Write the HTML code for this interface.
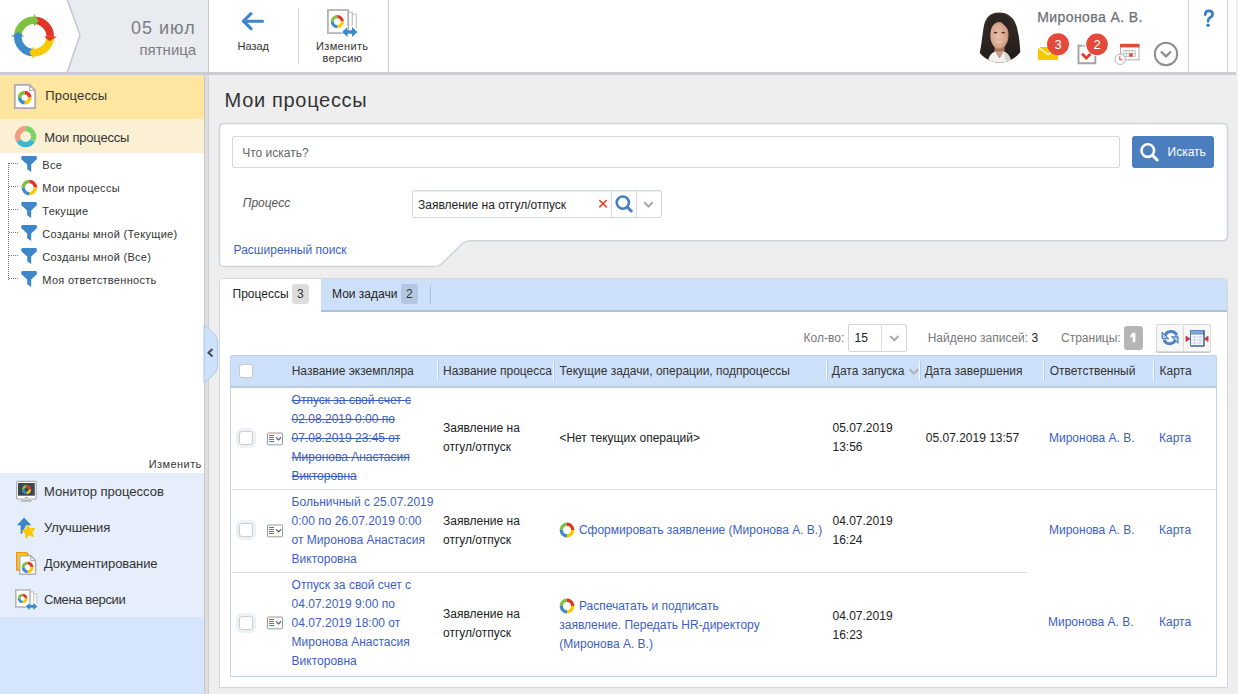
<!DOCTYPE html>
<html><head><meta charset="utf-8">
<style>
*{box-sizing:border-box;margin:0;padding:0}
html,body{width:1238px;height:694px;overflow:hidden;background:#eeeeee;font-family:"Liberation Sans",sans-serif;color:#333;position:relative}
.a{position:absolute}
.t{position:absolute;white-space:nowrap;line-height:1}
.sb{font-size:13px;color:#333}
.tr{font-size:11px;color:#333;letter-spacing:0.3px}
.c12{font-size:12px}
.ml{position:absolute;font-size:12px;line-height:19px;white-space:nowrap;margin-top:1px}
.lnk{color:#3d5fc4}
.cb{position:absolute;width:20px;height:20px;border-radius:6px;background:#ecf1f8}
.cb i{position:absolute;left:3px;top:3px;width:14px;height:14px;border:1px solid #cdcdcd;border-radius:3px;background:#fff}
</style></head><body>
<!-- ============ HEADER ============ -->
<div class="a" style="left:0;top:0;width:1236px;height:72px;background:#fff"></div>
<div class="a" style="left:1236px;top:0;width:2px;height:694px;background:#f0f0f0"></div>
<div class="a" style="left:0;top:72px;width:1236px;height:3px;background:#c9cdd2"></div>
<svg class="a" style="left:0;top:0" width="209" height="72">
<polygon points="67,0 208,0 208,72 67,72 80,35" fill="#e8ebf0"/>
<polyline points="67,-1 80,35 67,73" fill="none" stroke="#c6cad0" stroke-width="1.6"/>
<rect x="208" y="0" width="1" height="72" fill="#c9cdd2"/>
<path d="M17.80,36.50 A16.2,16.2 0 0 1 34.85,20.32" stroke="#7cc23c" stroke-width="7.6" fill="none"/>
<path d="M34.00,20.30 A16.2,16.2 0 0 1 50.18,37.35" stroke="#e2342b" stroke-width="7.6" fill="none"/>
<path d="M50.20,36.50 A16.2,16.2 0 0 1 33.15,52.68" stroke="#fbc900" stroke-width="7.6" fill="none"/>
<path d="M34.00,52.70 A16.2,16.2 0 0 1 17.82,35.65" stroke="#3e8acb" stroke-width="7.6" fill="none"/>
<polygon points="34.00,26.50 34.00,13.50 38.74,21.01" fill="#7cc23c"/>
<polygon points="44.00,36.50 57.00,36.50 49.49,41.24" fill="#e2342b"/>
<polygon points="34.00,46.50 34.00,59.50 29.26,51.99" fill="#fbc900"/>
<polygon points="24.00,36.50 11.00,36.50 18.51,31.76" fill="#3e8acb"/>
</svg>
<div class="t" style="left:131px;top:19px;font-size:18px;letter-spacing:1px;color:#7b7d82">05 июл</div>
<div class="t" style="left:139.5px;top:42px;font-size:15px;color:#7b7d82">пятница</div>
<!-- toolbar -->
<svg class="a" style="left:209px;top:0" width="180" height="72">
<path d="M41,8 V0" stroke="none"/>
<path d="M34.4,21.2 H53.5 M42,13.7 L34.4,21.2 L42,28.7" stroke="#3f86c8" stroke-width="3.1" fill="none" stroke-linecap="round" stroke-linejoin="round"/>
<rect x="89" y="8" width="1" height="56" fill="#d9dde2"/>
<rect x="179" y="0" width="2" height="72" fill="#c9cdd2"/>
</svg>
<div class="t" style="left:237.5px;top:40.7px;font-size:11px;color:#333">Назад</div>
<svg class="a" style="left:320px;top:5px" width="45" height="36">
<path d="M28.7,7.3 H32.3 V20.8" stroke="#c4c4c4" stroke-width="1.3" fill="none"/>
<path d="M32.3,9.4 H36.4 V23" stroke="#cacaca" stroke-width="1.3" fill="none"/>
<rect x="7.9" y="5" width="20.3" height="23.1" fill="#fff" stroke="#b0b0b0" stroke-width="1.7"/>
<path d="M12.3,16.6 A5,5 0 0 1 17.3,11.6" stroke="#7cc23c" stroke-width="3.1" fill="none"/>
<path d="M17.3,11.6 A5,5 0 0 1 22.3,16.6" stroke="#e2342b" stroke-width="3.1" fill="none"/>
<path d="M22.3,16.6 A5,5 0 0 1 17.3,21.6" stroke="#fbc900" stroke-width="3.1" fill="none"/>
<path d="M17.3,21.6 A5,5 0 0 1 12.3,16.6" stroke="#3e8acb" stroke-width="3.1" fill="none"/>
<path d="M22,27 L27.5,22 V25.3 H32 V22 L37.4,27 L32,32 V28.7 H27.5 V32 Z" fill="#3d87cc" stroke="#fff" stroke-width="1.2" paint-order="stroke"/>
</svg>
<div class="t" style="left:316px;top:40.7px;font-size:11px;letter-spacing:0.35px;color:#333">Изменить</div>
<div class="t" style="left:322.5px;top:52.5px;font-size:11px;letter-spacing:0.35px;color:#333">версию</div>
<!-- user area -->
<svg class="a" style="left:972px;top:8px" width="56" height="60">
<defs><clipPath id="av"><circle cx="27.7" cy="29.5" r="25.2"/></clipPath>
<radialGradient id="skin" cx="0.45" cy="0.5" r="0.6"><stop offset="0" stop-color="#e8c0a8"/><stop offset="0.7" stop-color="#d7a58c"/><stop offset="1" stop-color="#b98068"/></radialGradient>
<linearGradient id="hair" x1="0" y1="0" x2="0" y2="1"><stop offset="0" stop-color="#3a302b"/><stop offset="1" stop-color="#1f1a18"/></linearGradient></defs>
<g clip-path="url(#av)">
<path d="M26,4.3 C18,4.5 13,10 11.5,20 C10,30 9,42 6.5,49 C10,53 15,56 19,56 L37,56 C42,56 46,52 48.5,47 C48,38 47.5,30 45.5,22 C43.5,10 36,4.2 26,4.3 Z" fill="url(#hair)"/>
<path d="M22.5,37 L22.5,45 L32.5,45 L32.5,37 Z" fill="#a87560"/>
<path d="M18.3,27 C18.3,19 22,14 27.5,14 C33,14 36.5,19 36.5,27 C36.5,35.5 32.5,40.8 27.3,40.8 C22,40.8 18.3,35.5 18.3,27 Z" fill="url(#skin)"/>
<path d="M17.5,31 C17,21 21,15 27,12.5 C29.5,15 33.5,17 37,23 L38.5,14 C36,8 31,6 27,6 C22,6 17,9 15.5,15 Z" fill="#2b2421"/>
<path d="M21.8,25 Q23.5,24 25.2,25 M29.5,25 Q31.2,24 32.9,25" stroke="#4e3429" stroke-width="1.3" fill="none"/>
<path d="M24.3,33.3 Q27.3,35.2 30.3,33.3" stroke="#e9cbbd" stroke-width="1.4" fill="none"/>
<path d="M15,58 C16,48 20,44 23.5,43.5 L27.5,50 L31.5,43.5 C35,44 39,48 40,58 Z" fill="#f3f1ef"/>
<path d="M23.5,43.5 L27.5,50 L31.5,43.5 Z" fill="#cf9e88"/>
<path d="M31.5,43.5 C34.5,44.5 37,47 38.5,51 L40,58 L35.5,58 Z" fill="#d6d3d1"/>
</g>
</svg>
<div class="t" style="left:1037.3px;top:10.3px;font-size:14px;letter-spacing:0.4px;color:#6c7078;-webkit-text-stroke:0.25px #6c7078">Миронова А. В.</div>
<svg class="a" style="left:1030px;top:30px" width="150" height="40">
<!-- envelope -->
<rect x="8" y="17" width="20" height="13" fill="#f9c800"/>
<path d="M8,17 L18,24.5 L28,17" stroke="#fff" stroke-width="1.2" fill="none"/>
<circle cx="28" cy="14.3" r="11" fill="#e5493a"/>
<!-- tasks -->
<path d="M52.4,15.8 H48.5 V33.3 H65.3 V26" stroke="#a3a3a3" stroke-width="1.9" fill="none"/>
<rect x="53.2" y="14.9" width="1.6" height="2" fill="#b0b0b0"/>
<path d="M52,23.8 L56.3,28 L60.5,24" stroke="#e33b2e" stroke-width="2.8" fill="none"/>
<circle cx="67" cy="14.3" r="10.8" fill="#e5493a"/>
<!-- calendar -->
<rect x="90.5" y="14.5" width="18.5" height="15.3" fill="#fff" stroke="#b0b0b0" stroke-width="1"/>
<rect x="90" y="13.8" width="19.5" height="3.6" fill="#e5493a"/>
<path d="M93.3,20.6 H105.3 M93.3,23.6 H105.3 M93.3,26.6 H105.3 M93.3,20.6 V26.6 M96.3,20.6 V26.6 M99.3,20.6 V26.6 M102.3,20.6 V26.6 M105.3,20.6 V26.6" stroke="#bdbdbd" stroke-width="0.9"/>
<rect x="99.3" y="23.4" width="3.3" height="3.3" fill="#e5493a"/>
<circle cx="90.2" cy="29.3" r="5.2" fill="#fff" stroke="#a9a9a9" stroke-width="0.9"/>
<path d="M89.8,26.3 V29.8 H92.6" stroke="#e5493a" stroke-width="1.1" fill="none"/>
<!-- chevron circle -->
<circle cx="136" cy="24" r="11.2" fill="none" stroke="#8e8e8e" stroke-width="2"/>
<path d="M131,21.5 L136,26.3 L141,21.5" stroke="#8e8e8e" stroke-width="2.4" fill="none"/>
</svg>
<div class="t" style="left:1054.5px;top:37.6px;font-size:13px;color:#fff">3</div>
<div class="t" style="left:1093.5px;top:37.6px;font-size:13px;color:#fff">2</div>
<div class="a" style="left:1188px;top:0;width:1px;height:72px;background:#cdd1d6"></div>
<div class="a" style="left:1227px;top:0;width:1px;height:72px;background:#cdd1d6"></div>
<svg class="a" style="left:1195px;top:5px" width="25" height="28" viewBox="1195 5 25 28">
<path d="M1205.2,14.6 C1205.3,11.9 1206.9,10.9 1208.9,10.9 C1211.2,10.9 1212.6,12.4 1212.6,14.4 C1212.6,17.2 1208.4,17.6 1208.1,20.4 V21.2" stroke="#3d7cc9" stroke-width="2.7" fill="none" stroke-linecap="round"/>
<circle cx="1208.1" cy="25.3" r="1.8" fill="#3d7cc9"/>
</svg>

<!-- ============ SIDEBAR ============ -->
<div class="a" style="left:0;top:75px;width:204px;height:619px;background:#fff"></div>
<div class="a" style="left:0;top:75px;width:204px;height:44px;background:#fee6a0"></div>
<div class="a" style="left:0;top:119px;width:204px;height:34px;background:#fcf0d4"></div>
<div class="a" style="left:0;top:473px;width:204px;height:144px;background:#e5eefa"></div>
<div class="a" style="left:0;top:617px;width:204px;height:77px;background:#d5e5fb"></div>
<div class="a" style="left:204px;top:75px;width:1px;height:619px;background:#c8c8c8"></div>
<div class="a" style="left:205px;top:75px;width:3px;height:619px;background:#dedede"></div>
<div class="a" style="left:208px;top:75px;width:1px;height:619px;background:#d2d2d2"></div>
<svg class="a" style="left:0;top:0" width="204" height="694">
<path d="M14.8,84.8 H29.5 L35.2,90.5 V108.2 H14.8 Z" fill="#fff" stroke="#acacac" stroke-width="1.8"/>
<path d="M29.5,84.8 V90.5 H35.2" fill="none" stroke="#b3b3b3" stroke-width="1.2"/>
<path d="M19.65,97.60 A5.05,5.05 0 0 1 24.70,92.55" stroke="#7cc23c" stroke-width="3.7" fill="none"/>
<path d="M24.70,92.55 A5.05,5.05 0 0 1 29.75,97.60" stroke="#e2342b" stroke-width="3.7" fill="none"/>
<path d="M29.75,97.60 A5.05,5.05 0 0 1 24.70,102.65" stroke="#fbc900" stroke-width="3.7" fill="none"/>
<path d="M24.70,102.65 A5.05,5.05 0 0 1 19.65,97.60" stroke="#3e8acb" stroke-width="3.7" fill="none"/>
<path d="M18.67,140.60 A8,8 0 0 1 25.60,128.60" stroke="#f49a80" stroke-width="5.2" fill="none"/>
<path d="M25.60,128.60 A8,8 0 0 1 32.53,140.60" stroke="#7ed36c" stroke-width="5.2" fill="none"/>
<path d="M32.53,140.60 A8,8 0 0 1 18.67,140.60" stroke="#3cb8d2" stroke-width="5.2" fill="none"/>
<path transform="translate(21,156)" d="M0.3,1.2 Q0.3,0 1.6,0 H14.6 Q15.8,0 15.8,1.2 V3.2 L10.2,8.6 V16 L6.2,13.2 V8.6 L0.3,3.2 Z" fill="#3d86c9"/>
<path transform="translate(21,202)" d="M0.3,1.2 Q0.3,0 1.6,0 H14.6 Q15.8,0 15.8,1.2 V3.2 L10.2,8.6 V16 L6.2,13.2 V8.6 L0.3,3.2 Z" fill="#3d86c9"/>
<path transform="translate(21,225)" d="M0.3,1.2 Q0.3,0 1.6,0 H14.6 Q15.8,0 15.8,1.2 V3.2 L10.2,8.6 V16 L6.2,13.2 V8.6 L0.3,3.2 Z" fill="#3d86c9"/>
<path transform="translate(21,248)" d="M0.3,1.2 Q0.3,0 1.6,0 H14.6 Q15.8,0 15.8,1.2 V3.2 L10.2,8.6 V16 L6.2,13.2 V8.6 L0.3,3.2 Z" fill="#3d86c9"/>
<path transform="translate(21,271)" d="M0.3,1.2 Q0.3,0 1.6,0 H14.6 Q15.8,0 15.8,1.2 V3.2 L10.2,8.6 V16 L6.2,13.2 V8.6 L0.3,3.2 Z" fill="#3d86c9"/>
<path d="M23.20,187.60 A6.1,6.1 0 0 1 29.30,181.50" stroke="#7cc23c" stroke-width="3.4" fill="none"/>
<path d="M29.30,181.50 A6.1,6.1 0 0 1 35.40,187.60" stroke="#e2342b" stroke-width="3.4" fill="none"/>
<path d="M35.40,187.60 A6.1,6.1 0 0 1 29.30,193.70" stroke="#fbc900" stroke-width="3.4" fill="none"/>
<path d="M29.30,193.70 A6.1,6.1 0 0 1 23.20,187.60" stroke="#3e8acb" stroke-width="3.4" fill="none"/>
<path d="M8.5,163 V280" stroke="#777" stroke-width="1" stroke-dasharray="1,1" fill="none"/>
<path d="M9,163.5 H19" stroke="#777" stroke-width="1" stroke-dasharray="1,1" fill="none"/>
<path d="M9,186.5 H19" stroke="#777" stroke-width="1" stroke-dasharray="1,1" fill="none"/>
<path d="M9,209.5 H19" stroke="#777" stroke-width="1" stroke-dasharray="1,1" fill="none"/>
<path d="M9,232.5 H19" stroke="#777" stroke-width="1" stroke-dasharray="1,1" fill="none"/>
<path d="M9,255.5 H19" stroke="#777" stroke-width="1" stroke-dasharray="1,1" fill="none"/>
<path d="M9,278.5 H19" stroke="#777" stroke-width="1" stroke-dasharray="1,1" fill="none"/>
<rect x="16.6" y="481.4" width="19.6" height="17.6" rx="1" fill="#fff" stroke="#adadad" stroke-width="1.2"/>
<rect x="18" y="483" width="16.8" height="12.7" fill="#3c4856"/>
<rect x="25" y="497" width="3" height="0.9" fill="#999"/>
<rect x="21" y="500" width="10.8" height="1.9" fill="#b9b9b9"/>
<path d="M23.10,489.60 A3.4,3.4 0 0 1 26.50,486.20" stroke="#7cc23c" stroke-width="2.4" fill="none"/>
<path d="M26.50,486.20 A3.4,3.4 0 0 1 29.90,489.60" stroke="#e2342b" stroke-width="2.4" fill="none"/>
<path d="M29.90,489.60 A3.4,3.4 0 0 1 26.50,493.00" stroke="#fbc900" stroke-width="2.4" fill="none"/>
<path d="M26.50,493.00 A3.4,3.4 0 0 1 23.10,489.60" stroke="#3e8acb" stroke-width="2.4" fill="none"/>
<path d="M24.1,517.6 L31.3,525.3 H26 L22,533.8 H20.6 V525.3 H16.9 Z" fill="#3d86c9"/>
<polygon points="27.48,524.91 30.23,528.65 34.88,528.51 32.17,532.29 33.74,536.66 29.31,535.25 25.63,538.09 25.61,533.44 21.77,530.83 26.18,529.37" fill="#fbc700" stroke="#fbc700" stroke-width="0.8" stroke-linejoin="round"/>
<path d="M16.8,552.8 H26.5 L29.5,556 V570 H16.8 Z" fill="#fdd02a" stroke="#f39a10" stroke-width="1.6"/>
<path d="M19.8,555.8 H30.8 L35.6,560.6 V574.2 H19.8 Z" fill="#fff" stroke="#b0b0b0" stroke-width="1.4"/>
<path d="M30.8,555.8 V560.6 H35.6" fill="none" stroke="#b0b0b0" stroke-width="1.1"/>
<path d="M23.20,567.30 A4.4,4.4 0 0 1 27.60,562.90" stroke="#7cc23c" stroke-width="3" fill="none"/>
<path d="M27.60,562.90 A4.4,4.4 0 0 1 32.00,567.30" stroke="#e2342b" stroke-width="3" fill="none"/>
<path d="M32.00,567.30 A4.4,4.4 0 0 1 27.60,571.70" stroke="#fbc900" stroke-width="3" fill="none"/>
<path d="M27.60,571.70 A4.4,4.4 0 0 1 23.20,567.30" stroke="#3e8acb" stroke-width="3" fill="none"/>
<rect x="30" y="591.8" width="6.6" height="11.4" fill="#fff"/>
<path d="M30.5,591.8 H33.8 V602" stroke="#c8c8c8" stroke-width="1.2" fill="none"/>
<path d="M33.8,593.5 H36.6 V603.2" stroke="#cdcdcd" stroke-width="1.2" fill="none"/>
<rect x="15.8" y="590" width="14.2" height="17" fill="#fff" stroke="#b3b3b3" stroke-width="1.5"/>
<path d="M19.10,598.50 A3.5,3.5 0 0 1 22.60,595.00" stroke="#7cc23c" stroke-width="2.6" fill="none"/>
<path d="M22.60,595.00 A3.5,3.5 0 0 1 26.10,598.50" stroke="#e2342b" stroke-width="2.6" fill="none"/>
<path d="M26.10,598.50 A3.5,3.5 0 0 1 22.60,602.00" stroke="#fbc900" stroke-width="2.6" fill="none"/>
<path d="M22.60,602.00 A3.5,3.5 0 0 1 19.10,598.50" stroke="#3e8acb" stroke-width="2.6" fill="none"/>
<path d="M25.8,606.4 L29.8,602.9 V605.1 H33.4 V602.9 L37.4,606.4 L33.4,609.9 V607.7 H29.8 V609.9 Z" fill="#3d87cc" stroke="#e5eefa" stroke-width="1" paint-order="stroke"/>
</svg>
<div class="t sb" style="left:45.3px;top:89.3px;letter-spacing:0.15px">Процессы</div>
<div class="t sb" style="left:44.2px;top:131px;letter-spacing:-0.2px">Мои процессы</div>
<div class="t tr" style="left:42.3px;top:160.2px">Все</div>
<div class="t tr" style="left:42.3px;top:183.2px">Мои процессы</div>
<div class="t tr" style="left:42.3px;top:206.2px">Текущие</div>
<div class="t tr" style="left:42.3px;top:229.2px">Созданы мной (Текущие)</div>
<div class="t tr" style="left:42.3px;top:252.2px">Созданы мной (Все)</div>
<div class="t tr" style="left:42.3px;top:275.2px">Моя ответственность</div>
<div class="t" style="left:148.8px;top:458.9px;font-size:11px;letter-spacing:0.42px;color:#383838">Изменить</div>
<div class="t sb" style="left:44px;top:485.2px">Монитор процессов</div>
<div class="t sb" style="left:44px;top:521.2px;letter-spacing:-0.15px">Улучшения</div>
<div class="t sb" style="left:44px;top:557.2px;letter-spacing:-0.1px">Документирование</div>
<div class="t sb" style="left:44px;top:593.2px;letter-spacing:-0.37px">Смена версии</div>

<!-- title -->
<div class="t" style="left:224.6px;top:90px;font-size:20px;letter-spacing:0.68px;color:#333">Мои процессы</div>
<!-- search card -->
<svg class="a" style="left:0;top:0" width="1238" height="694">
<path d="M224.5,123.5 H1222.5 Q1227.5,123.5 1227.5,128.5 V235.5 Q1227.5,240.8 1222.5,240.8 H471 C467,240.8 464,241.8 461.5,244.3 L442,263.5 C439.5,266 437,266.6 433,266.6 H223.5 Q219.5,266.6 219.5,262.5 V128.5 Q219.5,123.5 224.5,123.5 Z" fill="#fff" stroke="#cfd4db" stroke-width="1.5"/>
</svg>
<div class="a" style="left:232px;top:136px;width:888px;height:32px;border:1px solid #d5d9df;border-radius:2px;background:#fff"></div>
<div class="t c12" style="left:242.2px;top:146.6px;color:#666">Что искать?</div>
<div class="a" style="left:1132px;top:136px;width:82px;height:32px;border-radius:3px;background:#4a7ebf"></div>
<svg class="a" style="left:1132px;top:136px" width="82" height="32">
<circle cx="15.8" cy="14.6" r="6.3" fill="none" stroke="#fff" stroke-width="2.6"/>
<path d="M20.3,19.1 L25.2,24" stroke="#fff" stroke-width="3" stroke-linecap="round"/>
</svg>
<div class="t c12" style="left:1167.5px;top:145.8px;color:#fff">Искать</div>
<div class="t c12" style="left:242.7px;top:196.8px;color:#555;font-style:italic">Процесс</div>
<div class="a" style="left:412px;top:190px;width:250px;height:28px;border:1px solid #d2d7de;border-radius:2px;background:#fff;box-shadow:inset 0 1px 1px #eee"></div>
<div class="a" style="left:611px;top:191px;width:1px;height:26px;background:#d8dce2"></div>
<div class="a" style="left:636px;top:191px;width:1px;height:26px;background:#d8dce2"></div>
<div class="t c12" style="left:418px;top:198.8px;color:#222">Заявление на отгул/отпуск</div>
<svg class="a" style="left:590px;top:190px" width="72" height="27">
<path d="M9.3,10 L16.7,17.4 M16.7,10 L9.3,17.4" stroke="#e8492f" stroke-width="1.7"/>
<circle cx="32.8" cy="12.6" r="6.1" fill="none" stroke="#4a7ec4" stroke-width="2.6"/>
<path d="M37.2,17 L41.3,21" stroke="#4a7ec4" stroke-width="3" stroke-linecap="round"/>
<path d="M54.3,12.3 L58.4,16.6 L62.6,12.3" stroke="#a3a7ad" stroke-width="2" fill="none"/>
</svg>
<div class="t c12" style="left:233.6px;top:243.8px;color:#3d5fc4">Расширенный поиск</div>

<!-- tabs panel -->
<div class="a" style="left:219px;top:278px;width:1009px;height:410px;border:1px solid #d3d7dd;border-radius:4px 4px 0 0;background:#fff;overflow:hidden">
  <div class="a" style="left:0;top:0;width:1007px;height:33px;background:#cde0fa;border-bottom:2px solid #abc0dc"></div>
  <div class="a" style="left:0;top:0;width:101px;height:34px;background:#fff"></div>
</div>
<div class="t c12" style="left:232.5px;top:287.8px;color:#222">Процессы</div>
<div class="a" style="left:292px;top:284px;width:17px;height:20px;border-radius:3px;background:#dcdcdc"></div>
<div class="t c12" style="left:297px;top:288px;color:#333">3</div>
<div class="t c12" style="left:332px;top:287.8px;color:#222">Мои задачи</div>
<div class="a" style="left:401px;top:284px;width:17px;height:20px;border-radius:3px;background:#b3c7e0"></div>
<div class="t c12" style="left:406px;top:288px;color:#333">2</div>
<div class="a" style="left:430px;top:284.5px;width:1px;height:19px;background:#a9bfdc"></div>

<!-- toolbar -->
<div class="t c12" style="left:803.6px;top:331.8px;color:#777">Кол-во:</div>
<div class="a" style="left:848px;top:324px;width:59px;height:28px;border:1px solid #d6d6d6;border-radius:2px;background:#fff"></div>
<div class="a" style="left:881px;top:325px;width:1px;height:26px;background:#dcdcdc"></div>
<div class="t c12" style="left:854.5px;top:331.8px;color:#222">15</div>
<svg class="a" style="left:882px;top:324px" width="25" height="28"><path d="M8.2,12 L12.3,16.2 L16.4,12" stroke="#a7abb0" stroke-width="2" fill="none"/></svg>
<div class="t c12" style="left:927.7px;top:331.8px;color:#777">Найдено записей: <span style="color:#222">3</span></div>
<div class="t c12" style="left:1061px;top:331.8px;color:#777">Страницы:</div>
<div class="a" style="left:1124px;top:326px;width:19px;height:24px;border-radius:3px;background:#b5b5b5"></div>
<svg class="a" style="left:1124px;top:326px" width="19" height="23"><path d="M8.2,6.7 L11.4,6.7 L11.4,16.3 L8.6,16.3 L8.6,10.2 Q7.6,11 6.2,11.4 L6.2,9.2 Q7.6,8.5 8.2,6.7 Z" fill="#fff"/></svg>
<div class="a" style="left:1156px;top:324px;width:28px;height:28px;border:1px solid #dadada;border-radius:2px 0 0 2px;background:#f7f7f5;box-shadow:0 1px 0 #c9c9c9"></div>
<div class="a" style="left:1183px;top:324px;width:28px;height:28px;border:1px solid #dadada;border-radius:0 2px 2px 0;background:#f7f7f5;box-shadow:0 1px 0 #c9c9c9"></div>
<svg class="a" style="left:1156px;top:324px" width="56" height="28">
<defs><linearGradient id="rg" x1="0" y1="0" x2="0" y2="1"><stop offset="0" stop-color="#3e6fb0"/><stop offset="0.5" stop-color="#9cc4ee"/><stop offset="1" stop-color="#3e6fb0"/></linearGradient></defs>
<path d="M9,12.2 A6.2,6.2 0 0 1 20.8,11.5" stroke="#4d82c4" stroke-width="3" fill="none"/>
<path d="M6.2,8.2 V14.8 H12.6 Z" fill="#a9cdf2" stroke="#3e6fae" stroke-width="1"/>
<path d="M8,16 A6.2,6.2 0 0 0 19.6,15.2" stroke="#4d82c4" stroke-width="3" fill="none"/>
<path d="M15.6,12.8 H22 V19.3 Z" fill="#a9cdf2" stroke="#3e6fae" stroke-width="1"/>
<rect x="34.5" y="6.5" width="13.5" height="15.5" fill="#fff" stroke="#5a7eae" stroke-width="1"/>
<rect x="34.5" y="6.5" width="13.5" height="3.5" fill="#7fa9d8" stroke="#5a86bd" stroke-width="1"/>
<path d="M35,13 H47.5 M35,16 H47.5 M35,19 H47.5 M38.5,10 V21.5 M44,10 V21.5" stroke="#c9d3e6" stroke-width="1"/>
<path d="M48,7 V22 H35" stroke="#3a5278" stroke-width="1" fill="none"/>
<path d="M30,12.3 L34,14.8 L30,17.3 Z M30,14.8 H32 M52,12.3 L48.5,14.8 L52,17.3 Z" fill="#c83a4a" stroke="#c83a4a" stroke-width="1"/>
</svg>

<!-- table -->
<div class="a" style="left:230px;top:355px;width:987px;height:322px;border:1px solid #bed2ea;border-radius:3px 3px 0 0;background:#fff"></div>
<div class="a" style="left:230px;top:355px;width:987px;height:33px;border-radius:3px 3px 0 0;background:#cde0fa;border:1px solid #bed2ea;border-bottom:2px solid #bccde4"></div>
<div class="cb" style="left:236px;top:361px;background:transparent"><i style="border-color:#c9c9c9"></i></div>
<div class="t c12" style="left:291.7px;top:365px;color:#333">Название экземпляра</div>
<div class="t c12" style="left:443px;top:365px;color:#333">Название процесса</div>
<div class="t c12" style="left:559.4px;top:365px;color:#333">Текущие задачи, операции, подпроцессы</div>
<div class="t c12" style="left:831.8px;top:365px;color:#333">Дата запуска</div>
<div class="t c12" style="left:924.7px;top:365px;color:#333">Дата завершения</div>
<div class="t c12" style="left:1049.7px;top:365px;color:#333">Ответственный</div>
<div class="t c12" style="left:1159.5px;top:365px;color:#333">Карта</div>
<div class="a" style="left:437px;top:361px;width:1px;height:19px;background:#f7faff"></div><div class="a" style="left:438px;top:361px;width:1px;height:19px;background:#b3cbea"></div>
<div class="a" style="left:553px;top:361px;width:1px;height:19px;background:#f7faff"></div><div class="a" style="left:554px;top:361px;width:1px;height:19px;background:#b3cbea"></div>
<div class="a" style="left:826px;top:361px;width:1px;height:19px;background:#f7faff"></div><div class="a" style="left:827px;top:361px;width:1px;height:19px;background:#b3cbea"></div>
<div class="a" style="left:919px;top:361px;width:1px;height:19px;background:#f7faff"></div><div class="a" style="left:920px;top:361px;width:1px;height:19px;background:#b3cbea"></div>
<div class="a" style="left:1043px;top:361px;width:1px;height:19px;background:#f7faff"></div><div class="a" style="left:1044px;top:361px;width:1px;height:19px;background:#b3cbea"></div>
<div class="a" style="left:1153px;top:361px;width:1px;height:19px;background:#f7faff"></div><div class="a" style="left:1154px;top:361px;width:1px;height:19px;background:#b3cbea"></div>
<svg class="a" style="left:906px;top:366px" width="14" height="10"><path d="M3.5,3.3 L7.8,7.6 L12,3.3" stroke="#adb2b9" stroke-width="2" fill="none"/></svg>

<!-- row borders -->
<div class="a" style="left:231px;top:489px;width:985px;height:1px;background:#e2e2e2"></div>
<div class="a" style="left:231px;top:572px;width:796px;height:1px;background:#e2e2e2"></div>

<div class="cb" style="left:236px;top:428px"><i></i></div>
<svg class="a" style="left:266px;top:431.5px" width="18" height="14">
<rect x="1.5" y="1" width="15" height="11.8" rx="0.8" fill="#fff" stroke="#9a9a9a" stroke-width="1"/>
<path d="M3,3.5 H8 M3,5.5 H8 M3,7.5 H8 M3,9.5 H8" stroke="#3d7cc9" stroke-width="1"/>
<path d="M10.2,5.3 L12.6,7.8 L15,5.3" stroke="#555" stroke-width="1.2" fill="none"/>
</svg><div class="ml lnk" style="left:291.6px;top:390.3px;text-decoration:line-through">Отпуск за свой счет с<br>02.08.2019 0:00 по<br>07.08.2019 23:45 от<br>Миронова Анастасия<br>Викторовна</div>
<div class="ml" style="left:443px;top:418.3px;color:#222">Заявление на<br>отгул/отпуск</div>
<div class="ml" style="left:559.4px;top:428.3px;color:#222">&lt;Нет текущих операций&gt;</div>
<div class="ml" style="left:832.5px;top:418.3px;color:#222">05.07.2019<br>13:56</div>
<div class="ml" style="left:925.8px;top:428.1px;color:#222">05.07.2019 13:57</div>
<div class="ml lnk" style="left:1049px;top:428.3px">Миронова А. В.</div>
<div class="ml lnk" style="left:1159px;top:428.3px">Карта</div>
<div class="cb" style="left:236px;top:520.3px"><i></i></div>
<svg class="a" style="left:266px;top:523.8px" width="18" height="14">
<rect x="1.5" y="1" width="15" height="11.8" rx="0.8" fill="#fff" stroke="#9a9a9a" stroke-width="1"/>
<path d="M3,3.5 H8 M3,5.5 H8 M3,7.5 H8 M3,9.5 H8" stroke="#3d7cc9" stroke-width="1"/>
<path d="M10.2,5.3 L12.6,7.8 L15,5.3" stroke="#555" stroke-width="1.2" fill="none"/>
</svg><div class="ml lnk" style="left:291.6px;top:492.3px">Больничный с 25.07.2019<br>0:00 по 26.07.2019 0:00<br>от Миронова Анастасия<br>Викторовна</div>
<div class="ml" style="left:443px;top:511.3px;color:#222">Заявление на<br>отгул/отпуск</div>
<svg class="a" style="left:559px;top:522px" width="16" height="16">
<path d="M2.25,8 A5.75,5.75 0 0 1 8,2.25" stroke="#7cc23c" stroke-width="3.3" fill="none"/>
<path d="M8,2.25 A5.75,5.75 0 0 1 13.75,8" stroke="#e2342b" stroke-width="3.3" fill="none"/>
<path d="M13.75,8 A5.75,5.75 0 0 1 8,13.75" stroke="#fbc900" stroke-width="3.3" fill="none"/>
<path d="M8,13.75 A5.75,5.75 0 0 1 2.25,8" stroke="#3e8acb" stroke-width="3.3" fill="none"/>
</svg>
<div class="ml lnk" style="left:578.9px;top:519.8px">Сформировать заявление (Миронова А. В.)</div>
<div class="ml" style="left:832.5px;top:511.3px;color:#222">04.07.2019<br>16:24</div>
<div class="ml lnk" style="left:1049px;top:519.8px">Миронова А. В.</div>
<div class="ml lnk" style="left:1159px;top:519.8px">Карта</div>
<div class="cb" style="left:236px;top:612.5px"><i></i></div>
<svg class="a" style="left:266px;top:616.0px" width="18" height="14">
<rect x="1.5" y="1" width="15" height="11.8" rx="0.8" fill="#fff" stroke="#9a9a9a" stroke-width="1"/>
<path d="M3,3.5 H8 M3,5.5 H8 M3,7.5 H8 M3,9.5 H8" stroke="#3d7cc9" stroke-width="1"/>
<path d="M10.2,5.3 L12.6,7.8 L15,5.3" stroke="#555" stroke-width="1.2" fill="none"/>
</svg><div class="ml lnk" style="left:291.6px;top:575.3px">Отпуск за свой счет с<br>04.07.2019 9:00 по<br>04.07.2019 18:00 от<br>Миронова Анастасия<br>Викторовна</div>
<div class="ml" style="left:443px;top:603.8px;color:#222">Заявление на<br>отгул/отпуск</div>
<svg class="a" style="left:559px;top:598px" width="16" height="16">
<path d="M2.25,8 A5.75,5.75 0 0 1 8,2.25" stroke="#7cc23c" stroke-width="3.3" fill="none"/>
<path d="M8,2.25 A5.75,5.75 0 0 1 13.75,8" stroke="#e2342b" stroke-width="3.3" fill="none"/>
<path d="M13.75,8 A5.75,5.75 0 0 1 8,13.75" stroke="#fbc900" stroke-width="3.3" fill="none"/>
<path d="M8,13.75 A5.75,5.75 0 0 1 2.25,8" stroke="#3e8acb" stroke-width="3.3" fill="none"/>
</svg>
<div class="ml lnk" style="left:578.9px;top:596.1px">Распечатать и подписать</div>
<div class="ml lnk" style="left:559.3px;top:615.1px">заявление. Передать HR-директору<br>(Миронова А. В.)</div>
<div class="ml" style="left:832.5px;top:605.8px;color:#222">04.07.2019<br>16:23</div>
<div class="ml lnk" style="left:1048px;top:612.3px">Миронова А. В.</div>
<div class="ml lnk" style="left:1159px;top:612.3px">Карта</div>
<!-- collapse handle -->
<svg class="a" style="left:203px;top:325px" width="16" height="60">
<path d="M1,0.5 L8,6 Q14.5,11 14.5,18 V40 Q14.5,47 8,52 L1,57.5 Z" fill="#cfe2fb" stroke="#a9c6ea" stroke-width="1"/>
<path d="M9.5,24 L5.5,27.7 L9.5,31.4" stroke="#444b55" stroke-width="2" fill="none"/>
</svg>


</body></html>
